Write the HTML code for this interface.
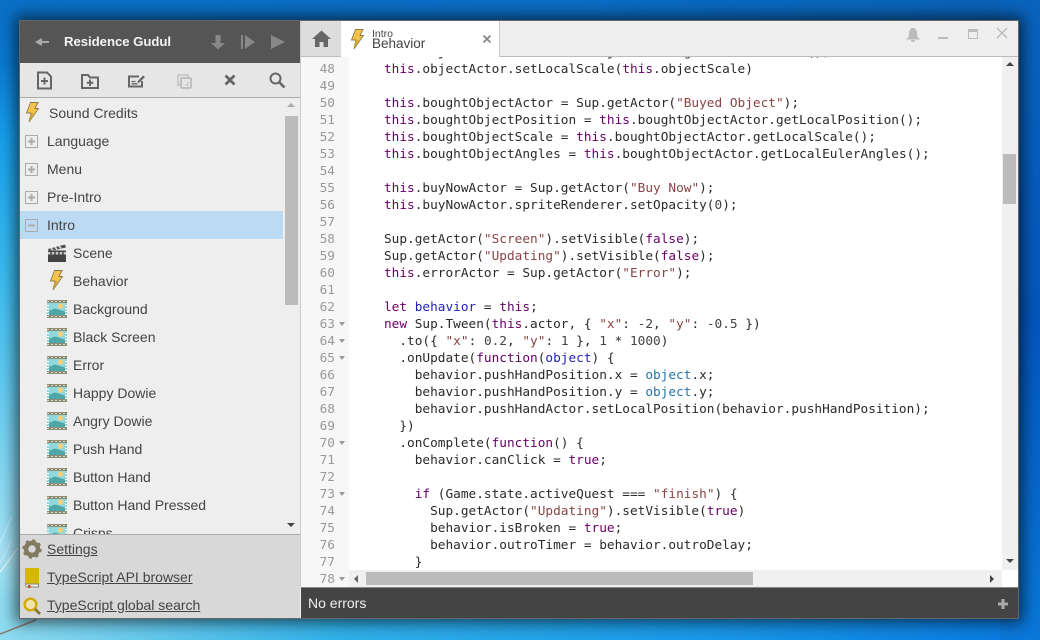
<!DOCTYPE html>
<html><head><meta charset="utf-8"><style>
html,body{margin:0;padding:0;width:1040px;height:640px;overflow:hidden}
body{position:relative;font-family:"Liberation Sans",sans-serif;background:#0868cc}
#bgl{position:absolute;left:0;top:0;width:60px;height:640px;background:linear-gradient(180deg,#0a6ec4 0,#0a78d0 60px,#18a0ec 140px,#3cbcf0 280px,#70d0f2 420px,#a8e4f5 560px,#70d4ef 640px)}
#bgt{position:absolute;left:0;top:0;width:1040px;height:20px;background:linear-gradient(90deg,#0a70c6,#0a6cc4 600px,#0a60b4)}
#bgr{position:absolute;left:1000px;top:0;width:40px;height:640px;background:linear-gradient(180deg,#0a64bc,#0456bd 50%,#0a78d8)}
#bgb{position:absolute;left:0;top:600px;width:1040px;height:40px;background:linear-gradient(90deg,#8fdcf0 0,#30b0e8 340px,#1a98e8 700px,#0a7ce0 1000px,#0a70d8)}
#win{position:absolute;left:19px;top:20px;width:1000px;height:599px;background:#eee;box-shadow:0 0 14px 4px rgba(0,0,0,.6)}
.a{position:absolute}
.w{position:absolute;left:19px;top:20px;width:1000px;height:599px;border:1px solid #666;box-sizing:border-box;pointer-events:none;z-index:9}
.t{position:absolute;font-size:14px;line-height:28px;height:28px;color:#444;white-space:nowrap}
.f{position:absolute;font-size:14px;line-height:28px;color:#444;text-decoration:underline;white-space:nowrap}
.l{position:absolute;left:384px;height:17px;line-height:17px;font-family:"DejaVu Sans Mono","Liberation Mono",monospace;font-size:12.77px;color:#2a2a2a;white-space:pre}
.n{position:absolute;width:34px;left:301px;text-align:right;height:17px;line-height:17px;font-family:"DejaVu Sans Mono","Liberation Mono",monospace;font-size:12.77px;color:#999}
.k{color:#606}.d{color:#22b}.v{color:#27a}.s{color:#844}.m{color:#444}
.fa{position:absolute;left:339px;width:0;height:0;border-left:3px solid transparent;border-right:3px solid transparent;border-top:4px solid #999}
svg{position:absolute;overflow:visible}
</style></head><body>
<div id="bgl"></div><div id="bgb"></div><div id="bgt"></div><div id="bgr"></div>
<svg width="1040" height="640" style="left:0;top:0"><path d="M0 634L36 620" stroke="#8a7a6a" stroke-width="1.5" fill="none"/><path d="M0 572L18 548" stroke="#e8f8ff" stroke-width="1.2" fill="none"/><path d="M0 543L12 516M0 563L12 540" stroke="#e8f8ff" stroke-width="1" fill="none" opacity=".5"/></svg>
<div id="win"></div>

<svg width="0" height="0" style="left:0;top:0"><defs>
<g id="bolt"><path d="M5.500 .5L13 .5 10 6.500 13.500 6.500 4 20 6 11 1.500 11Z" fill="#f5c24c" stroke="#8a7a4a" stroke-width=".9"/><path d="M4 20L6 11 8.500 11Z" fill="#dca818"/></g>
<g id="img"><rect x="0" y="0" width="20" height="18" fill="#8b8a72"/><rect x="0" y="3" width="20" height="12" fill="#fff"/><rect x="2" y="3" width="16" height="12" fill="#8fd8dc"/><path d="M0 1.500h20M0 16.500h20" stroke="#d8d8c8" stroke-width="1" stroke-dasharray="2 2"/><path d="M1 3v12M19 3v12" stroke="#3aa" stroke-width="1" stroke-dasharray="2 1"/><path d="M2 15L2 11 8 8.500 18 11.500 18 15Z" fill="#4ea6a8"/><circle cx="13.500" cy="6" r="2.800" fill="#f4cf80"/></g>
<g id="box"><rect x=".5" y=".5" width="12" height="12" fill="none" stroke="#aaa"/><path d="M3 6.500h7" stroke="#aaa" stroke-width="2"/></g>
<g id="boxp"><use href="#box"/><path d="M6.500 3v7" stroke="#aaa" stroke-width="2"/></g>
</defs></svg>

<!-- header -->
<div class="a" style="left:20px;top:21px;width:280px;height:42px;background:#555"></div>
<svg width="16" height="14" style="left:34px;top:35px"><path d="M1 7L8 3v8Z" fill="#aaa"/><rect x="7" y="6" width="8" height="2" fill="#aaa"/></svg>
<div class="a" style="left:64px;top:21px;line-height:41px;font-size:13.200px;font-weight:bold;color:#f4f4f4;white-space:nowrap;letter-spacing:-.05px">Residence Gudul</div>
<svg width="16" height="18" style="left:211px;top:34px"><path d="M4.500 1h5v8h4.500L7 15.500 0 9h4.500Z" fill="#888"/></svg>
<svg width="16" height="16" style="left:240px;top:34px"><path d="M1 1h2v14H1zM5 1L15 8 5 15Z" fill="#888"/></svg>
<svg width="16" height="16" style="left:270px;top:34px"><path d="M1 1L15 8 1 15Z" fill="#888"/></svg>

<!-- toolbar -->
<div class="a" style="left:20px;top:63px;width:280px;height:35px;background:#e6e6e6;border-bottom:1px solid #aaa;box-sizing:border-box"></div>
<svg width="16" height="18" style="left:37px;top:71px"><path d="M1 1.500h9l4 4v12H1Z" fill="none" stroke="#666" stroke-width="2"/><path d="M7.500 6.500v7M4 10h7" stroke="#666" stroke-width="2"/></svg>
<svg width="18" height="16" style="left:81px;top:73px"><path d="M1 2h6l2 2.500h8V15H1Z" fill="none" stroke="#666" stroke-width="2"/><path d="M9 6.500v6.500M5.800 9.800h6.500" stroke="#666" stroke-width="2"/></svg>
<svg width="18" height="14" style="left:128px;top:74px"><path d="M11 2.500H1v10h13V7" fill="none" stroke="#666" stroke-width="2"/><path d="M3.500 7.500h4M3.500 9.800h6" stroke="#666" stroke-width="1.300"/><path d="M9 8L15 1.500 17 3 11 9Z" fill="#666"/></svg>
<svg width="15" height="15" style="left:177px;top:74px"><path d="M3 11H1V1h10v2" fill="none" stroke="#bbb" stroke-width="1.300"/><rect x="4" y="4" width="10" height="10" rx="1" fill="none" stroke="#bbb" stroke-width="1.800"/><path d="M8 11h3V8" fill="none" stroke="#bbb"/></svg>
<svg width="12" height="12" style="left:224px;top:74px"><path d="M1.500 1.500L10.500 10.500M10.500 1.500L1.500 10.500" stroke="#666" stroke-width="2.800"/></svg>
<svg width="17" height="17" style="left:269px;top:72px"><circle cx="6.500" cy="6.500" r="5" fill="none" stroke="#666" stroke-width="2"/><path d="M10.500 10.500L15.500 15.500" stroke="#666" stroke-width="2.600"/></svg>

<!-- tree -->
<div class="a" style="left:20px;top:211px;width:263px;height:28px;background:#bcdaf3"></div>
<svg width="16" height="22" style="left:25px;top:102px"><use href="#bolt"/></svg>
<div class="t" style="left:49px;top:99px">Sound Credits</div>
<svg width="13" height="13" style="left:25px;top:135px"><use href="#boxp"/></svg><div class="t" style="left:47px;top:127px">Language</div>
<svg width="13" height="13" style="left:25px;top:163px"><use href="#boxp"/></svg><div class="t" style="left:47px;top:155px">Menu</div>
<svg width="13" height="13" style="left:25px;top:191px"><use href="#boxp"/></svg><div class="t" style="left:47px;top:183px">Pre-Intro</div>
<svg width="13" height="13" style="left:25px;top:219px"><use href="#box"/></svg><div class="t" style="left:47px;top:211px">Intro</div>
<svg width="18" height="19" style="left:48px;top:243px"><path d="M0 7.500h18V19H0Z" fill="#444"/><path d="M0 6L17 1.500 18 4.500 1 8.500Z" fill="#555"/><path d="M3 5L5 7.500M7 4L9 6.500M11 3L13 5.500" stroke="#ddd" stroke-width="1.500"/><path d="M0 9h18v2.500H0z" fill="#ccc"/><path d="M3 9v2.500M7 9v2.500M11 9v2.500M15 9v2.500" stroke="#333" stroke-width="1.300"/></svg>
<div class="t" style="left:73px;top:239px">Scene</div>
<svg width="16" height="22" style="left:49px;top:270px"><use href="#bolt"/></svg>
<div class="t" style="left:73px;top:267px">Behavior</div>
<svg width="20" height="18" style="left:47px;top:300px"><use href="#img"/></svg><div class="t" style="left:73px;top:295px">Background</div>
<svg width="20" height="18" style="left:47px;top:328px"><use href="#img"/></svg><div class="t" style="left:73px;top:323px">Black Screen</div>
<svg width="20" height="18" style="left:47px;top:356px"><use href="#img"/></svg><div class="t" style="left:73px;top:351px">Error</div>
<svg width="20" height="18" style="left:47px;top:384px"><use href="#img"/></svg><div class="t" style="left:73px;top:379px">Happy Dowie</div>
<svg width="20" height="18" style="left:47px;top:412px"><use href="#img"/></svg><div class="t" style="left:73px;top:407px">Angry Dowie</div>
<svg width="20" height="18" style="left:47px;top:440px"><use href="#img"/></svg><div class="t" style="left:73px;top:435px">Push Hand</div>
<svg width="20" height="18" style="left:47px;top:468px"><use href="#img"/></svg><div class="t" style="left:73px;top:463px">Button Hand</div>
<svg width="20" height="18" style="left:47px;top:496px"><use href="#img"/></svg><div class="t" style="left:73px;top:491px">Button Hand Pressed</div>
<svg width="20" height="18" style="left:47px;top:524px"><use href="#img"/></svg><div class="t" style="left:73px;top:519px">Crisps</div>
<div class="a" style="left:285px;top:116px;width:13px;height:189px;background:#bbb"></div>
<div class="a" style="left:287px;top:103px;width:0;height:0;border-left:4px solid transparent;border-right:4px solid transparent;border-bottom:4px solid #aaa"></div>
<div class="a" style="left:287px;top:523px;width:0;height:0;border-left:4px solid transparent;border-right:4px solid transparent;border-top:4px solid #444"></div>

<!-- footer -->
<div class="a" style="left:20px;top:534px;width:280px;height:85px;background:#d8d8d8;border-top:1px solid #aaa;box-sizing:border-box"></div>
<svg width="20" height="20" style="left:22px;top:539px"><circle cx="10" cy="10" r="6" fill="none" stroke="#807a60" stroke-width="4.500"/><circle cx="10" cy="10" r="8.500" fill="none" stroke="#807a60" stroke-width="2.500" stroke-dasharray="3 3.670"/></svg>
<div class="f" style="left:47px;top:535px">Settings</div>
<svg width="15" height="20" style="left:25px;top:568px"><path d="M0 0h14v16H0Z" fill="#d4b800"/><path d="M.5 16h13v3H2Q.5 19 .5 16Z" fill="#eee" stroke="#887"/><path d="M3 17h2.500v3H3Z" fill="#c8501c"/></svg>
<div class="f" style="left:47px;top:563px">TypeScript API browser</div>
<svg width="18" height="18" style="left:23px;top:597px"><circle cx="7.500" cy="7.500" r="5.800" fill="#eee4b0" stroke="#d0aa00" stroke-width="2.400"/><path d="M12 12L17 17" stroke="#8a7a30" stroke-width="3"/></svg>
<div class="f" style="left:47px;top:591px">TypeScript global search</div>

<!-- tabs -->
<div class="a" style="left:300px;top:21px;width:1px;height:566px;background:#ccc"></div>
<div class="a" style="left:301px;top:21px;width:717px;height:36px;background:#eee;border-bottom:1px solid #bbb;box-sizing:border-box"></div>
<div class="a" style="left:301px;top:21px;width:40px;height:35px;background:#ddd"></div>
<div class="a" style="left:341px;top:21px;width:159px;height:36px;background:#fff;border-right:1px solid #ccc;box-sizing:border-box"></div>
<svg width="19" height="17" style="left:312px;top:30px"><path d="M9.500 .5L19 9h-3v8h-4.500v-5h-4v5H3V9H0Z" fill="#666"/></svg>
<svg width="16" height="22" style="left:350px;top:29px"><use href="#bolt"/></svg>
<div class="a" style="left:372px;top:28px;font-size:10.500px;line-height:12px;color:#444;white-space:nowrap">Intro</div>
<div class="a" style="left:372px;top:36px;font-size:13.500px;line-height:16px;color:#444;white-space:nowrap">Behavior</div>
<svg width="8" height="8" style="left:483px;top:35px"><path d="M.5 .5L7.500 7.500M7.500 .5L.5 7.500" stroke="#888" stroke-width="1.800"/></svg>
<svg width="14" height="14" style="left:906px;top:28px"><path d="M7 0C10 0 11 3 11 6 11 8.500 12 10 13.500 10.500V11.500H.500V10.500C2 10 3 8.500 3 6 3 3 4 0 7 0ZM5 12h4Q9 14 7 14T5 12Z" fill="#bbb"/></svg>
<div class="a" style="left:938px;top:37px;width:10px;height:2px;background:#bbb"></div>
<div class="a" style="left:968px;top:29px;width:10px;height:10px;border:1px solid #bbb;border-top:3px solid #bbb;box-sizing:border-box"></div>
<svg width="12" height="12" style="left:996px;top:27px"><path d="M1 1L11 11M11 1L1 11" stroke="#bbb" stroke-width="1.400"/></svg>

<!-- editor -->
<div class="a" style="left:301px;top:57px;width:48px;height:530px;background:#f7f7f7"></div>
<div class="a" style="left:349px;top:57px;width:653px;height:513px;background:#fff"></div>
<div class="a" style="left:0;top:57px;width:1002px;height:513px;overflow:hidden"><div class="a" style="left:0;top:1px;width:1002px;height:512px">
<div class="l" style="top:-14px;"><span class="k">this</span>.objectPosition = <span class="k">this</span>.objectActor.getLocalPosition();</div>
<div class="l" style="top:3px"><span class="k">this</span>.objectActor.setLocalScale(<span class="k">this</span>.objectScale)</div>
<div class="l" style="top:37px"><span class="k">this</span>.boughtObjectActor = Sup.getActor(<span class="s">"Buyed Object"</span>);</div>
<div class="l" style="top:54px"><span class="k">this</span>.boughtObjectPosition = <span class="k">this</span>.boughtObjectActor.getLocalPosition();</div>
<div class="l" style="top:71px"><span class="k">this</span>.boughtObjectScale = <span class="k">this</span>.boughtObjectActor.getLocalScale();</div>
<div class="l" style="top:88px"><span class="k">this</span>.boughtObjectAngles = <span class="k">this</span>.boughtObjectActor.getLocalEulerAngles();</div>
<div class="l" style="top:122px"><span class="k">this</span>.buyNowActor = Sup.getActor(<span class="s">"Buy Now"</span>);</div>
<div class="l" style="top:139px"><span class="k">this</span>.buyNowActor.spriteRenderer.setOpacity(<span class="m">0</span>);</div>
<div class="l" style="top:173px">Sup.getActor(<span class="s">"Screen"</span>).setVisible(<span class="k">false</span>);</div>
<div class="l" style="top:190px">Sup.getActor(<span class="s">"Updating"</span>).setVisible(<span class="k">false</span>);</div>
<div class="l" style="top:207px"><span class="k">this</span>.errorActor = Sup.getActor(<span class="s">"Error"</span>);</div>
<div class="l" style="top:241px"><span class="k">let</span> <span class="d">behavior</span> = <span class="k">this</span>;</div>
<div class="l" style="top:258px"><span class="k">new</span> Sup.Tween(<span class="k">this</span>.actor, { <span class="s">"x"</span>: <span class="m">-2</span>, <span class="s">"y"</span>: <span class="m">-0.5</span> })</div>
<div class="l" style="top:275px">  .to({ <span class="s">"x"</span>: <span class="m">0.2</span>, <span class="s">"y"</span>: <span class="m">1</span> }, <span class="m">1</span> * <span class="m">1000</span>)</div>
<div class="l" style="top:292px">  .onUpdate(<span class="k">function</span>(<span class="d">object</span>) {</div>
<div class="l" style="top:309px">    behavior.pushHandPosition.x = <span class="v">object</span>.x;</div>
<div class="l" style="top:326px">    behavior.pushHandPosition.y = <span class="v">object</span>.y;</div>
<div class="l" style="top:343px">    behavior.pushHandActor.setLocalPosition(behavior.pushHandPosition);</div>
<div class="l" style="top:360px">  })</div>
<div class="l" style="top:377px">  .onComplete(<span class="k">function</span>() {</div>
<div class="l" style="top:394px">    behavior.canClick = <span class="k">true</span>;</div>
<div class="l" style="top:428px">    <span class="k">if</span> (Game.state.activeQuest === <span class="s">"finish"</span>) {</div>
<div class="l" style="top:445px">      Sup.getActor(<span class="s">"Updating"</span>).setVisible(<span class="k">true</span>)</div>
<div class="l" style="top:462px">      behavior.isBroken = <span class="k">true</span>;</div>
<div class="l" style="top:479px">      behavior.outroTimer = behavior.outroDelay;</div>
<div class="l" style="top:496px">    }</div>
</div></div>
<!-- gutter -->
<div class="n" style="top:61px">48</div><div class="n" style="top:78px">49</div><div class="n" style="top:95px">50</div><div class="n" style="top:112px">51</div><div class="n" style="top:129px">52</div><div class="n" style="top:146px">53</div><div class="n" style="top:163px">54</div><div class="n" style="top:180px">55</div><div class="n" style="top:197px">56</div><div class="n" style="top:214px">57</div><div class="n" style="top:231px">58</div><div class="n" style="top:248px">59</div><div class="n" style="top:265px">60</div><div class="n" style="top:282px">61</div><div class="n" style="top:299px">62</div><div class="n" style="top:316px">63</div><div class="n" style="top:333px">64</div><div class="n" style="top:350px">65</div><div class="n" style="top:367px">66</div><div class="n" style="top:384px">67</div><div class="n" style="top:401px">68</div><div class="n" style="top:418px">69</div><div class="n" style="top:435px">70</div><div class="n" style="top:452px">71</div><div class="n" style="top:469px">72</div><div class="n" style="top:486px">73</div><div class="n" style="top:503px">74</div><div class="n" style="top:520px">75</div><div class="n" style="top:537px">76</div><div class="n" style="top:554px">77</div><div class="n" style="top:571px">78</div>
<div class="fa" style="top:322px"></div><div class="fa" style="top:339px"></div><div class="fa" style="top:356px"></div><div class="fa" style="top:441px"></div><div class="fa" style="top:492px"></div><div class="fa" style="top:577px"></div>

<!-- scrollbars -->
<div class="a" style="left:1002px;top:57px;width:16px;height:513px;background:#f0f0f0"></div>
<div class="a" style="left:1003px;top:154px;width:13px;height:50px;background:#bbb"></div>
<div class="a" style="left:1006px;top:62px;width:0;height:0;border-left:4px solid transparent;border-right:4px solid transparent;border-bottom:4px solid #444"></div>
<div class="a" style="left:1006px;top:559px;width:0;height:0;border-left:4px solid transparent;border-right:4px solid transparent;border-top:4px solid #444"></div>
<div class="a" style="left:349px;top:570px;width:653px;height:17px;background:#f0f0f0"></div>
<div class="a" style="left:1002px;top:570px;width:16px;height:17px;background:#fff"></div>
<div class="a" style="left:366px;top:572px;width:387px;height:13px;background:#bbb"></div>
<div class="a" style="left:354px;top:575px;width:0;height:0;border-top:4px solid transparent;border-bottom:4px solid transparent;border-right:4px solid #666"></div>
<div class="a" style="left:990px;top:575px;width:0;height:0;border-top:4px solid transparent;border-bottom:4px solid transparent;border-left:4px solid #444"></div>

<!-- status -->
<div class="a" style="left:301px;top:587px;width:717px;height:32px;background:#444;border-top:1px solid #888;box-sizing:border-box"></div>
<div class="a" style="left:308px;top:588px;line-height:30px;font-size:14px;color:#f0f0f0;white-space:nowrap">No errors</div>
<svg width="12" height="12" style="left:997px;top:598px"><path d="M6 1v10M1 6h10" stroke="#aaa" stroke-width="3"/></svg>
<div class="w"></div>
</body></html>
